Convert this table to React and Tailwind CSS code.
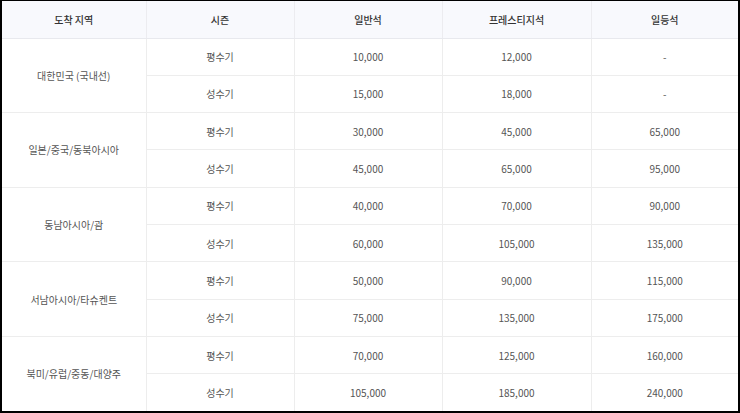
const ROWS = [
  { region: '대한민국 (국내선)', data: [['평수기', '10,000', '12,000', '-'], ['성수기', '15,000', '18,000', '-']] },
  { region: '일본/중국/동북아시아', data: [['평수기', '30,000', '45,000', '65,000'], ['성수기', '45,000', '65,000', '95,000']] },
  { region: '동남아시아/괌', data: [['평수기', '40,000', '70,000', '90,000'], ['성수기', '60,000', '105,000', '135,000']] },
  { region: '서남아시아/타슈켄트', data: [['평수기', '50,000', '90,000', '115,000'], ['성수기', '75,000', '135,000', '175,000']] },
  { region: '북미/유럽/중동/대양주', data: [['평수기', '70,000', '125,000', '160,000'], ['성수기', '105,000', '185,000', '240,000']] },
]

const HEAD = ['도착 지역', '시즌', '일반석', '프레스티지석', '일등석']

export default function App() {
  return (
    <div
      className="w-[740px] h-[413px] bg-white border-t border-l-2 border-r-2 border-b-2 border-black overflow-hidden"
      style={{ fontFamily: '"Noto Sans CJK KR", "Noto Sans", sans-serif' }}
    >
      <table className="w-full h-full table-fixed border-collapse text-[10px] text-[#555]">
        <colgroup>
          <col className="w-[144px]" />
          <col className="w-[148px]" />
          <col className="w-[148px]" />
          <col className="w-[149px]" />
          <col className="w-[147px]" />
        </colgroup>
        <thead>
          <tr className="h-[37px] bg-[#f8f9fd]">
            {HEAD.map((h, i) => (
              <th
                key={h}
                className={`font-medium text-[#333] text-center border-b border-[#e8e9ee] ${i < 4 ? 'border-r border-r-[#ececf0]' : ''}`}
              >
                {h}
              </th>
            ))}
          </tr>
        </thead>
        <tbody>
          {ROWS.map((g, gi) =>
            g.data.map((r, ri) => (
              <tr key={gi + '-' + ri} className="h-[37.3px]">
                {ri === 0 && (
                  <td rowSpan={2} className={`text-center border-r border-[#ededed] ${gi < 4 ? 'border-b' : ''}`}>
                    {g.region}
                  </td>
                )}
                {r.map((c, ci) => (
                  <td
                    key={ci}
                    className={`text-center border-[#ededed] ${ci < 3 ? 'border-r' : ''} ${gi < 4 || ri === 0 ? 'border-b' : ''}`}
                  >
                    {c}
                  </td>
                ))}
              </tr>
            ))
          )}
        </tbody>
      </table>
    </div>
  )
}
